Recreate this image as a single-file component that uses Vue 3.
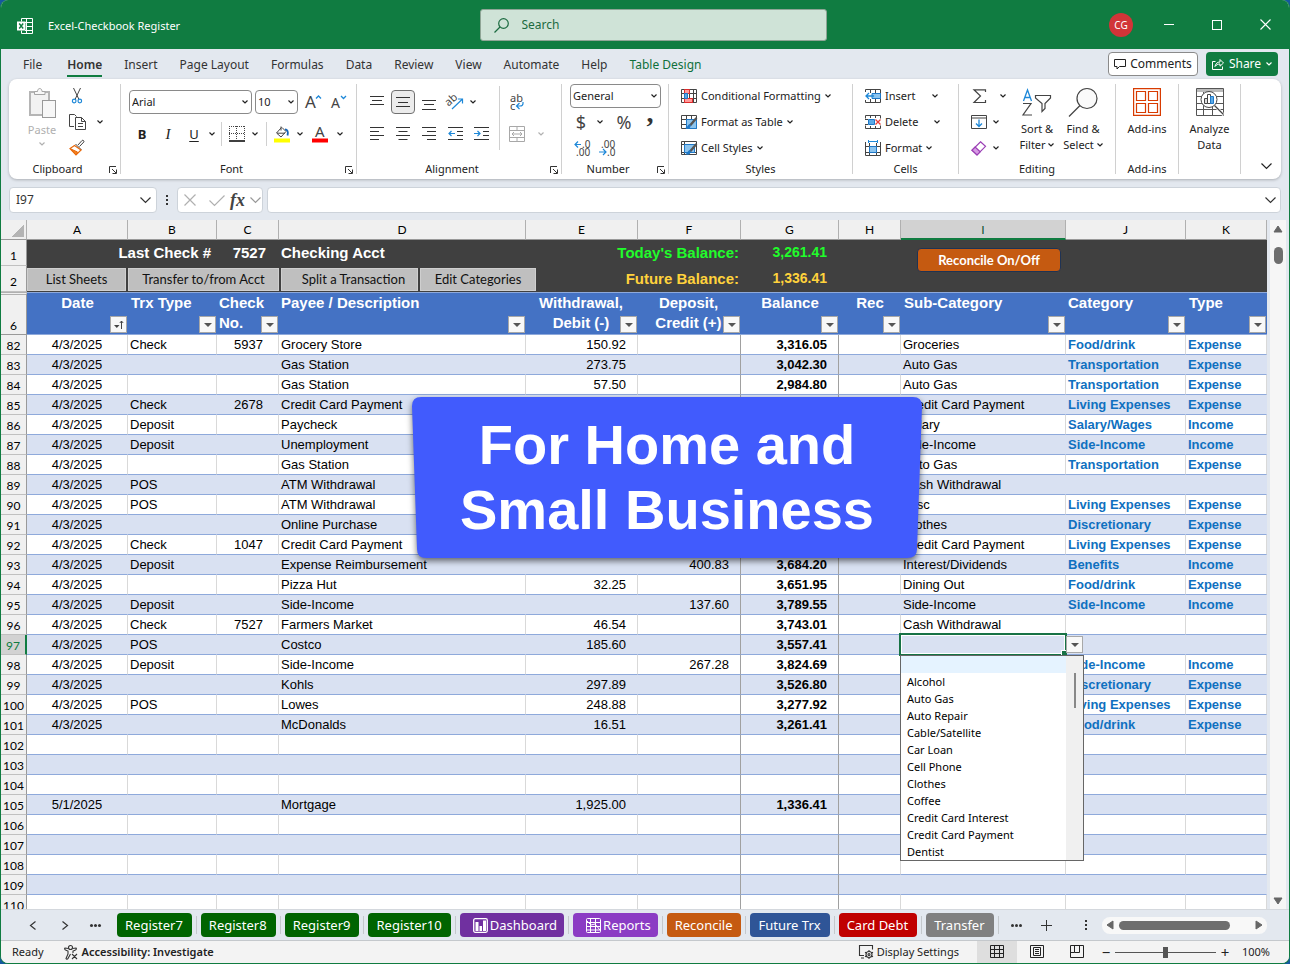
<script setup>
import { h, ref } from 'vue'

const iconSizes = {
  excel: [16, 16], search: [15, 15], min: [10, 10], max: [10, 10], close: [11, 11],
  comment: [12, 11], share: [12, 12], chev: [6, 4], chevL: [11, 6],
  paste: [27, 30], cut: [10, 16], copy: [17, 16], brush: [16, 16], launch: [8, 8],
  grow: [17, 16], shrink: [17, 16], border: [16, 16], fill: [16, 17], fontColor: [16, 17],
  alTop: [14, 12], alMid: [14, 12], alBot: [14, 12], alLeft: [14, 14], alCenter: [14, 14], alRight: [14, 14],
  outdent: [15, 14], indent: [15, 14], orient: [17, 16], wrap: [16, 16], merge: [16, 16],
  decInc: [16, 16], decDec: [16, 16],
  condFmt: [16, 14], fmtTable: [16, 14], cellStyles: [16, 14],
  insert: [16, 14], delete: [16, 14], format: [16, 16],
  sigma: [14, 15], fillDown: [16, 14], eraser: [16, 15], sort: [30, 28], find: [30, 28],
  addins: [28, 28], analyze: [28, 28],
  cancel: [12, 12], check: [16, 11],
  access: [14, 15], display: [15, 14], viewNormal: [14, 14], viewPage: [14, 14], viewBreak: [14, 14],
  chart: [15, 15], grid: [15, 15], prev: [6, 9], next: [6, 9], plus: [11, 11],
  triUp: [10, 8], triDown: [10, 8], triLeft: [8, 10], triRight: [8, 10], filter: [8, 4], sorted: [10, 10]
}
const Icon = (p) => h('svg', {
  class: 'icon', width: iconSizes[p.n][0], height: iconSizes[p.n][1], 'aria-hidden': 'true'
}, [h('use', { href: '#i-' + p.n })])

const menu = ['File', 'Home', 'Insert', 'Page Layout', 'Formulas', 'Data', 'Review', 'View', 'Automate', 'Help', 'Table Design']
const fontName = ref('Arial')
const fontSize = ref('10')
const numberFormat = ref('General')
const cellName = ref('I97')
const formula = ref('')
const query = ref('')
const zoomLevel = ref(100)

const columns = ['A', 'B', 'C', 'D', 'E', 'F', 'G', 'H', 'I', 'J', 'K']
const headings = [
  { c: 'mid', t: 'Date', f: 'sorted' }, { c: 'pad', t: 'Trx Type' }, { c: '', t: 'Check No.', narrow: true },
  { c: '', t: 'Payee / Description' }, { c: 'mid', t: 'Withdrawal, Debit (-)', narrow: true },
  { c: 'mid', t: 'Deposit, Credit (+)', narrow: true }, { c: 'mid', t: 'Balance' }, { c: 'mid', t: 'Rec' },
  { c: 'pad', t: 'Sub-Category' }, { c: '', t: 'Category' }, { c: 'pad', t: 'Type' }
]
const E = 'Expense', I = 'Income', D = '4/3/2025'
const rows = [
  [82, D, 'Check', '5937', 'Grocery Store', '150.92', '', '3,316.05', 'Groceries', 'Food/drink', E],
  [83, D, '', '', 'Gas Station', '273.75', '', '3,042.30', 'Auto Gas', 'Transportation', E],
  [84, D, '', '', 'Gas Station', '57.50', '', '2,984.80', 'Auto Gas', 'Transportation', E],
  [85, D, 'Check', '2678', 'Credit Card Payment', '', '', '', 'Credit Card Payment', 'Living Expenses', E],
  [86, D, 'Deposit', '', 'Paycheck', '', '', '', 'Salary', 'Salary/Wages', I],
  [87, D, 'Deposit', '', 'Unemployment', '', '', '', 'Side-Income', 'Side-Income', I],
  [88, D, '', '', 'Gas Station', '', '', '', 'Auto Gas', 'Transportation', E],
  [89, D, 'POS', '', 'ATM Withdrawal', '', '', '', 'Cash Withdrawal', '', ''],
  [90, D, 'POS', '', 'ATM Withdrawal', '', '', '', 'Misc', 'Living Expenses', E],
  [91, D, '', '', 'Online Purchase', '', '', '', 'Clothes', 'Discretionary', E],
  [92, D, 'Check', '1047', 'Credit Card Payment', '', '', '', 'Credit Card Payment', 'Living Expenses', E],
  [93, D, 'Deposit', '', 'Expense Reimbursement', '', '400.83', '3,684.20', 'Interest/Dividends', 'Benefits', I],
  [94, D, '', '', 'Pizza Hut', '32.25', '', '3,651.95', 'Dining Out', 'Food/drink', E],
  [95, D, 'Deposit', '', 'Side-Income', '', '137.60', '3,789.55', 'Side-Income', 'Side-Income', I],
  [96, D, 'Check', '7527', 'Farmers Market', '46.54', '', '3,743.01', 'Cash Withdrawal', '', ''],
  [97, D, 'POS', '', 'Costco', '185.60', '', '3,557.41', '', '', ''],
  [98, D, 'Deposit', '', 'Side-Income', '', '267.28', '3,824.69', '', 'Side-Income', I],
  [99, D, '', '', 'Kohls', '297.89', '', '3,526.80', '', 'Discretionary', E],
  [100, D, 'POS', '', 'Lowes', '248.88', '', '3,277.92', '', 'Living Expenses', E],
  [101, D, '', '', 'McDonalds', '16.51', '', '3,261.41', '', 'Food/drink', E],
  [102], [103], [104],
  [105, '5/1/2025', '', '', 'Mortgage', '1,925.00', '', '1,336.41', '', '', ''],
  [106], [107], [108], [109], [110]
]
const choices = ['', 'Alcohol', 'Auto Gas', 'Auto Repair', 'Cable/Satellite', 'Car Loan', 'Cell Phone', 'Clothes', 'Coffee', 'Credit Card Interest', 'Credit Card Payment', 'Dentist']
const sheets = [
  { t: 'Register7', c: 'green' }, { t: 'Register8', c: 'green' }, { t: 'Register9', c: 'green' }, { t: 'Register10', c: 'green' },
  { t: 'Dashboard', c: 'purple', i: 'chart' }, { t: 'Reports', c: 'violet', i: 'grid' }, { t: 'Reconcile', c: 'orange' },
  { t: 'Future Trx', c: 'blue' }, { t: 'Card Debt', c: 'red' }, { t: 'Transfer', c: 'gray' }
]
</script>

<template>
  <div class="window">
    <svg class="sprite" width="0" height="0" aria-hidden="true" fill="none" stroke="#444" stroke-width="1">
      <defs>
        <g id="i-excel"><path d="M4.500 3.500V.5h11v15h-11V12.500M9.500.5v15M8 4.500h7.500M9 8.500h6.500M8 12.500h7.500" stroke="#fff" fill="none" /><rect y="3.500" width="8.500" height="9" fill="#fff" /><path d="M2.200 5.500l4 5M6.200 5.500l-4 5" stroke="#107c41" stroke-width="1.400" /></g>
        <g id="i-search" stroke="#1c6b40" fill="none" stroke-width="1.200"><circle cx="9.500" cy="5.500" r="4.800" /><path d="M6 9L.5 14.500" /></g>
        <path id="i-min" d="M0 4.500h10" stroke="#fff" />
        <rect id="i-max" x=".5" y=".5" width="9" height="9" stroke="#fff" fill="none" />
        <path id="i-close" d="M.5.5l10 10M10.500.5l-10 10" stroke="#fff" stroke-width="1.100" />
        <path id="i-comment" d="M.5.5h11v7h-6L3 10V7.500H.5z" stroke="#222" fill="none" />
        <path id="i-share" d="M3.500 3.500h-3v8h10V8.500M3 8.500c.5-3 2.500-4.500 5-4.500V1.500l3.500 3.500L8 8.200V6C6 6 4.300 6.800 3 8.500z" stroke="#fff" fill="none" />
        <path id="i-chev" d="M.5.5L3 3 5.500.5" stroke="currentColor" stroke-width="1.200" fill="none" />
        <path id="i-chevL" d="M.5.5l5 5 5-5" stroke="currentColor" stroke-width="1.200" fill="none" />
        <g id="i-paste"><rect x="1" y="4" width="19" height="23" fill="#f2f2f2" stroke="#b5b5b5" stroke-width="2" /><path d="M5.500 6.500v-3h3c0-4 4.500-4 4.500 0h3v3z" fill="#f7f7f7" stroke="#a5a5a5" /><rect x="13.500" y="12.500" width="13" height="17" fill="#f7f7f7" stroke="#999" /></g>
        <g id="i-cut" fill="none"><path d="M1.500 0L7 11.500M8.500 0L3 11.500" stroke="#444" /><circle cx="2.200" cy="13" r="1.800" stroke="#1e88d8" stroke-width="1.200" /><circle cx="7.800" cy="13" r="1.800" stroke="#1e88d8" stroke-width="1.200" /></g>
        <g id="i-copy" stroke="#444" fill="none"><path d="M5 12.500H.5V.5h5l2 2" /><path d="M6.500 3.500h6l4 4v8h-10zM12.500 3.500v4h4M9 9.500h5M9 12.500h5" /></g>
        <g id="i-brush"><path d="M9 5l4-4.500c1-.8 2.500.5 1.800 1.500L10.500 6.500M6.500 4l6 6" stroke="#444" fill="none" /><path d="M5.500 5.500L1 8.500l6 6.500 5-5z" fill="#fff" stroke="#e8690b" stroke-width="1.200" /><path d="M2 9l6.500 3-1.500 3z" fill="#f58220" stroke="#e8690b" /></g>
        <path id="i-launch" d="M.5 7V.5H7M3 3l4 4M7.500 3.500v4h-4" stroke="#333" fill="none" />
        <g id="i-grow"><text x="0" y="14" font-size="17" fill="#444" stroke="none" class="glyph">A</text><path d="M11 4.500L13.500 2 16 4.500" stroke="#1e88d8" fill="none" stroke-width="1.300" /></g>
        <g id="i-shrink"><text x="0" y="14" font-size="14" fill="#444" stroke="none" class="glyph">A</text><path d="M10 2l2.500 2.500L15 2" stroke="#1e88d8" fill="none" stroke-width="1.300" /></g>
        <g id="i-border"><path d="M.5 0v14M15.500 0v14M0 .5h16M7.500 0v14M0 7.500h16" stroke="#444" stroke-dasharray="1 1" /><path d="M0 15h16" stroke="#000" stroke-width="1.600" /></g>
        <g id="i-fill"><path d="M7.500 1.500L2.500 7l4.500 4L12 5.500 8 1.500M7 .5v4M3 7.200h8" stroke="#444" fill="none" /><path d="M11 3.500c2.500 0 3.500 2 2.500 6" stroke="#1565b8" stroke-width="1.800" fill="none" /><path d="M0 12.500h16v4H0z" fill="#ff0" stroke="none" /></g>
        <g id="i-fontColor"><text x="3" y="11" font-size="15" fill="#444" stroke="none" class="glyph">A</text><path d="M0 12.500h16v4H0z" fill="#f00" stroke="none" /></g>
        <path id="i-alTop" d="M0 .5h14M2 4.500h10M0 8.500h14" stroke="#333" />
        <path id="i-alMid" d="M0 1.500h14M2 6.500h10M0 10.500h14" stroke="#333" />
        <path id="i-alBot" d="M0 4.500h14M2 8.500h10M0 13.500h14" stroke="#333" />
        <path id="i-alLeft" d="M0 .5h14M0 4.500h9M0 8.500h14M0 12.500h9" stroke="#333" />
        <path id="i-alCenter" d="M0 .5h14M2.500 4.500h9M0 8.500h14M2.500 12.500h9" stroke="#333" />
        <path id="i-alRight" d="M0 .5h14M5 4.500h9M0 8.500h14M5 12.500h9" stroke="#333" />
        <g id="i-outdent"><path d="M0 .5h15M9 4.500h6M9 8.500h6M0 12.500h15" stroke="#333" /><path d="M7 6.500H1M3.500 4L1 6.500 3.500 9" stroke="#1e88d8" stroke-width="1.200" fill="none" /></g>
        <g id="i-indent"><path d="M0 .5h15M9 4.500h6M9 8.500h6M0 12.500h15" stroke="#333" /><path d="M0 6.500h6M3.500 4L6 6.500 3.500 9" stroke="#1e88d8" stroke-width="1.200" fill="none" /></g>
        <g id="i-orient"><text x="-1" y="10" font-size="11" fill="#444" stroke="none" class="glyph" transform="rotate(-42 4 8)">ab</text><path d="M5 15L15.500 5M11 5h4.500v4.500" stroke="#1e88d8" fill="none" stroke-width="1.200" /></g>
        <g id="i-wrap"><text x="1" y="8" font-size="11" fill="#444" stroke="none" class="glyph">ab</text><text x="1" y="16" font-size="11" fill="#444" stroke="none" class="glyph">c</text><path d="M14 8v1.500q0 2.500-3 2.500H7.500M10.500 9l-3 3 3 3" stroke="#1e88d8" fill="none" stroke-width="1.200" /></g>
        <path id="i-merge" d="M.5.5h15v15H.5zM8 .5v4M8 11.500v4M.5 4.500h15M.5 11.500h15M3 8h10M5 6L3 8l2 2M11 6l2 2-2 2" stroke="#a8a8a8" fill="none" />
        <g id="i-decInc"><text x="8" y="8" font-size="10" fill="#444" stroke="none" class="glyph">.0</text><text x="2" y="16" font-size="10" fill="#444" stroke="none" class="glyph">.00</text><path d="M7 4.500H1M4 1.500l-3 3 3 3" stroke="#1e88d8" fill="none" stroke-width="1.200" /></g>
        <g id="i-decDec"><text x="2" y="8" font-size="10" fill="#444" stroke="none" class="glyph">.00</text><text x="8" y="16" font-size="10" fill="#444" stroke="none" class="glyph">.0</text><path d="M0 12h7M4 9l3 3-3 3" stroke="#1e88d8" fill="none" stroke-width="1.200" /></g>
        <g id="i-condFmt"><path d="M.5.5h15v13H.5zM3.500 0v14M8.500 0v14M12.500 0v14M0 4.500h16M0 9.500h16" stroke="#444" fill="none" /><path d="M3.500.5h5v4h-5zM3.500 9.500h8v4h-8z" fill="#ff9a9a" stroke="#e02b2b" /><path d="M3.500 4.500h3v5h-3z" fill="#5aa9e6" stroke="#1e78c8" /></g>
        <g id="i-fmtTable"><path d="M.5.5h15v13H.5zM5.500 0v14M10.500 0v14M0 4.500h16M0 9.500h16" stroke="#444" fill="none" /><path d="M5.500 4.500h10v9h-10z" fill="#8cc4ee" stroke="#1e78c8" /><path d="M15.500 3L9 10.500" stroke="#555" stroke-width="2.400" /><path d="M9.500 9.500c-3-1-2.500 3.500-5.500 3.500 2.500 1.800 6.500.5 5.500-3.500z" fill="#1e78c8" stroke="none" /></g>
        <g id="i-cellStyles"><path d="M.5.5h15v13H.5zM3.500 0v14M0 3.500h16M0 11.500h16" stroke="#444" fill="none" /><path d="M3.500 3.500h10v8h-10z" fill="#8cc4ee" stroke="#1e78c8" /><path d="M15.500 3L9 10.500" stroke="#555" stroke-width="2.400" /><path d="M9.500 9.500c-3-1-2.500 3.500-5.500 3.500 2.500 1.800 6.500.5 5.500-3.500z" fill="#1e78c8" stroke="none" /></g>
        <g id="i-insert"><path d="M.5 3V.5h15v13H.5V11M5.500 0v4M10.500 0v14M5.500 10v4M10 4.500h5M10 9.500h5" stroke="#444" fill="none" /><path d="M7 4.500h8.500v5H7z" fill="#8cc4ee" stroke="#1e78c8" /><path d="M9 7H1M4 4L1 7l3 3" stroke="#1e88d8" fill="none" stroke-width="1.300" /></g>
        <g id="i-delete"><path d="M.5 3.500v-3h15v3M.5 10.500v3h15v-3M5.500 0v3M10.500 0v3M5.500 11v3M10.500 11v3M0 4.500h3M0 9.500h3" stroke="#444" fill="none" /><path d="M3.500 4.500h6v5h-6z" fill="#5aa9e6" stroke="#1e78c8" /><path d="M10.500 4.500l5 5M15.500 4.500l-5 5" stroke="#e8403a" stroke-width="1.300" /></g>
        <g id="i-format"><path d="M.5 2v13.500h15V2M4.500 3v12.500M11.500 3v12.500M0 6.500h16M0 12.500h16" stroke="#444" fill="none" /><path d="M4.500 6.500h7v6h-7z" fill="#8cc4ee" stroke="#1e78c8" /><path d="M3.500 0v3M12.500 0v3M3.500 1.500h9" stroke="#1e88d8" fill="none" /></g>
        <path id="i-sigma" d="M12.500 3V.8H1L7.500 7 1 13.500h11.500V11" stroke="#444" fill="none" stroke-width="1.200" />
        <g id="i-fillDown"><path d="M.5.5h15v13H.5zM.5 3h15" stroke="#444" fill="none" /><path d="M8 4.500v7M5 8.500l3 3 3-3" stroke="#1e88d8" fill="none" stroke-width="1.300" /></g>
        <g id="i-eraser"><path d="M9.500.8l5 4.500L6 14 1 9.200z" stroke="#9b3fb5" fill="#fff" stroke-width="1.200" /><path d="M4.200 6L1 9.200 6 14l3.200-3.200z" stroke="#9b3fb5" fill="#d79be4" stroke-width="1.200" /></g>
        <g id="i-sort"><path d="M1.500 13L5.500 2l4 11M3 9.500h5" stroke="#1e88d8" fill="none" stroke-width="1.300" /><path d="M1 15.500h8l-8 11.500h9" stroke="#444" fill="none" stroke-width="1.200" /><path d="M13.500 7.500h15v2.500l-5.500 5.500v5l-3 3v-8L13.500 10z" stroke="#444" fill="none" stroke-width="1.200" /></g>
        <g id="i-find" fill="#fafafa" stroke="#444" stroke-width="1.200"><circle cx="19" cy="10.500" r="10" /><path d="M12 17.500L1 28.500" /></g>
        <path id="i-addins" d="M.6.6h26.800v26.800H.6zM3.500 3.500h9v9h-9zM15.500 3.500h9v9h-9zM3.500 15.500h9v9h-9zM15.500 15.500h9v9h-9z" stroke="#d83b01" fill="none" stroke-width="1.200" />
        <g id="i-analyze"><path d="M.5.5h27v27H.5zM0 8.500h28M0 15.500h28M0 21.500h28M7.500 4v24M16.500 4v24" stroke="#555" fill="#fff" /><path d="M1 1h26v3H1z" fill="#bbb" stroke="none" /><circle cx="13" cy="11.500" r="8" fill="#fff" stroke="#444" /><path d="M19 17.500l8.500 9.500" stroke="#fff" stroke-width="3" /><path d="M18.500 17.500l9 9" stroke="#444" stroke-width="1.200" /><path d="M8.500 10.500h3v5h-3z" stroke="#444" fill="#ddd" /><path d="M11.500 6.500h3v9h-3z" stroke="#444" fill="#fff" /><path d="M14.500 8.500h3v7h-3z" stroke="#1e78c8" fill="#5aa9e6" /></g>
        <path id="i-cancel" d="M.5.5l11 11M11.500.5l-11 11" stroke="#b0b0b0" stroke-width="1.200" />
        <path id="i-check" d="M.5 5.500l5 5L15.500.5" stroke="#b0b0b0" fill="none" stroke-width="1.200" />
        <g id="i-access" stroke="#333" fill="none" stroke-width="1.100"><circle cx="6.500" cy="2.500" r="2" /><path d="M4.500 3.500L1 3c-1 .8 0 2 1 2.200l2 .8v3L2 13.500c.3 1 1.500 1 2 0L6.500 9M8.500 3.500L12 3c1 .8 0 2-1 2.200L9 6v2M8 9l5 5M13 9l-5 5" /></g>
        <g id="i-display" stroke="#333" fill="none" stroke-width="1.100"><path d="M5 10.500H.5V.5h13v4M2 13h3" /><circle cx="10" cy="9.500" r="3" /><circle cx="10" cy="9.500" r="1" /><path d="M10 5v1.500M10 12.500V14M6 7.200l1.400.8M12.600 11l1.400.8M6 11.800l1.400-.8M12.600 8l1.400-.8" /></g>
        <path id="i-viewNormal" d="M.5.5h13v12H.5zM4.500 0v13M9.500 0v13M0 4.500h14M0 8.500h14" stroke="#222" fill="none" />
        <path id="i-viewPage" d="M.5.5h13v12H.5zM3.500 2.500h7v8h-7zM5 4.500h4M5 6.500h4M5 8.500h4" stroke="#222" fill="none" />
        <path id="i-viewBreak" d="M.5.5h13v12H.5zM4.500.5v7h5v-7M.5 7.500h4" stroke="#222" fill="none" />
        <g id="i-chart"><rect x=".7" y=".7" width="13.600" height="13.600" rx="1.500" stroke="#fff" fill="none" stroke-width="1.300" /><path d="M2.500 4h3v9h-3zM6.500 8h2.500v5H6.500zM10 2.500h3V13h-3z" fill="#fff" stroke="none" /></g>
        <g id="i-grid" stroke="#fff" fill="none"><rect x=".5" y=".5" width="14" height="14" rx="1" /><path d="M4.500 0v15M9.500 0v15M0 4.500h15M0 8.500h15M0 12h15M1 3l4 4 4-1 5 6" /></g>
        <path id="i-prev" d="M5.500.5l-5 4 5 4" stroke="#333" fill="none" stroke-width="1.200" />
        <path id="i-next" d="M.5.5l5 4-5 4" stroke="#333" fill="none" stroke-width="1.200" />
        <path id="i-plus" d="M5.500 0v11M0 5.500h11" stroke="#333" />
        <path id="i-triUp" d="M5 1l4 6H1z" fill="#666" stroke="#666" stroke-linejoin="round" />
        <path id="i-triDown" d="M5 7l4-6H1z" fill="#666" stroke="#666" stroke-linejoin="round" />
        <path id="i-triLeft" d="M1 5l6-4v8z" fill="#666" stroke="#666" stroke-linejoin="round" />
        <path id="i-triRight" d="M7 5L1 1v8z" fill="#666" stroke="#666" stroke-linejoin="round" />
        <path id="i-filter" d="M0 0h8L4 4z" fill="#555" stroke="none" />
        <g id="i-sorted"><path d="M0 5h5.500L2.800 8z" fill="#444" stroke="none" /><path d="M7.500 9V1M5.800 3l1.700-2 1.700 2" stroke="#444" fill="none" /></g>
      </defs>
    </svg>

    <header class="titlebar">
      <div class="title"><Icon n="excel" /><span>Excel-Checkbook Register</span></div>
      <label class="search"><Icon n="search" /><input v-model="query" type="search" placeholder="Search" aria-label="Search" /></label>
      <div class="controls">
        <button class="avatar">CG</button>
        <button aria-label="Minimize"><Icon n="min" /></button>
        <button aria-label="Maximize"><Icon n="max" /></button>
        <button aria-label="Close"><Icon n="close" /></button>
      </div>
    </header>

    <nav class="menu">
      <button v-for="m in menu" :key="m" :class="{ on: m === 'Home', design: m === 'Table Design' }">{{ m }}</button>
      <span class="grow"></span>
      <button class="comments"><Icon n="comment" />Comments</button>
      <button class="share"><Icon n="share" />Share<Icon n="chev" /></button>
    </nav>

    <section class="ribbon">
      <div class="group">
        <div class="clip">
          <button class="paste" disabled><Icon n="paste" /><span>Paste</span><Icon n="chev" /></button>
          <button aria-label="Cut"><Icon n="cut" /></button><span></span>
          <button aria-label="Copy"><Icon n="copy" /></button><button aria-label="Copy options"><Icon n="chev" /></button>
          <button aria-label="Format painter"><Icon n="brush" /></button>
        </div>
        <div class="label">Clipboard<button aria-label="Clipboard settings"><Icon n="launch" /></button></div>
      </div>

      <div class="group">
        <div class="two">
          <div class="line boxes">
            <span class="pick wide"><select v-model="fontName" aria-label="Font"><option>Arial</option></select><Icon n="chev" /></span>
            <span class="pick small"><select v-model="fontSize" aria-label="Font size"><option>10</option></select><Icon n="chev" /></span>
            <button class="b26" aria-label="Grow font"><Icon n="grow" /></button>
            <button class="b26" aria-label="Shrink font"><Icon n="shrink" /></button>
          </div>
          <div class="line">
            <button class="b26 bold">B</button><button class="b26 ital">I</button><button class="b26 under">U</button>
            <button class="b10" aria-label="Underline options"><Icon n="chev" /></button><i class="rule"></i>
            <button class="b22" aria-label="Borders"><Icon n="border" /></button><button class="b14" aria-label="Border options"><Icon n="chev" /></button><i class="rule"></i>
            <button class="b22" aria-label="Fill color"><Icon n="fill" /></button><button class="b14" aria-label="Fill options"><Icon n="chev" /></button>
            <button class="b26" aria-label="Font color"><Icon n="fontColor" /></button><button class="b14" aria-label="Color options"><Icon n="chev" /></button>
          </div>
        </div>
        <div class="label">Font<button aria-label="Font settings"><Icon n="launch" /></button></div>
      </div>

      <div class="group">
        <div class="align">
          <div class="five">
            <button aria-label="Top align"><Icon n="alTop" /></button>
            <button class="active" aria-label="Middle align"><Icon n="alMid" /></button>
            <button aria-label="Bottom align"><Icon n="alBot" /></button>
            <button aria-label="Orientation"><Icon n="orient" /></button>
            <button class="startward" aria-label="Orientation options"><Icon n="chev" /></button>
            <button aria-label="Align left"><Icon n="alLeft" /></button>
            <button aria-label="Center"><Icon n="alCenter" /></button>
            <button aria-label="Align right"><Icon n="alRight" /></button>
            <button aria-label="Decrease indent"><Icon n="outdent" /></button>
            <button aria-label="Increase indent"><Icon n="indent" /></button>
          </div>
          <div class="wraps">
            <button aria-label="Wrap text"><Icon n="wrap" /></button><span></span>
            <button aria-label="Merge" disabled><Icon n="merge" /></button><button aria-label="Merge options" disabled><Icon n="chev" /></button>
          </div>
        </div>
        <div class="label">Alignment<button aria-label="Alignment settings"><Icon n="launch" /></button></div>
      </div>

      <div class="group">
        <div class="stack number">
          <span class="pick"><select v-model="numberFormat" aria-label="Number format"><option>General</option></select><Icon n="chev" /></span>
          <div class="line"><button class="b22 sym">$</button><button class="b14" aria-label="Currency options"><Icon n="chev" /></button><button class="b26 sym">%</button><button class="b26 comma" aria-label="Comma style">,</button></div>
          <div class="line"><button class="b26" aria-label="Increase decimal"><Icon n="decInc" /></button><button class="b26" aria-label="Decrease decimal"><Icon n="decDec" /></button></div>
        </div>
        <div class="label">Number<button aria-label="Number settings"><Icon n="launch" /></button></div>
      </div>

      <div class="group">
        <div class="stack cmds">
          <button><Icon n="condFmt" />Conditional Formatting<Icon n="chev" /></button>
          <button><Icon n="fmtTable" />Format as Table<Icon n="chev" /></button>
          <button><Icon n="cellStyles" />Cell Styles<Icon n="chev" /></button>
        </div>
        <div class="label">Styles</div>
      </div>

      <div class="group">
        <div class="stack cmds split">
          <button><Icon n="insert" />Insert<Icon n="chev" /></button>
          <button><Icon n="delete" />Delete<Icon n="chev" /></button>
          <button class="near"><Icon n="format" />Format<Icon n="chev" /></button>
        </div>
        <div class="label">Cells</div>
      </div>

      <div class="group">
        <div class="edit">
          <div class="stack">
            <button class="gap" aria-label="AutoSum"><Icon n="sigma" /><Icon n="chev" /></button>
            <button aria-label="Fill"><Icon n="fillDown" /><Icon n="chev" /></button>
            <button aria-label="Clear"><Icon n="eraser" /><Icon n="chev" /></button>
          </div>
          <button class="big"><Icon n="sort" /><span>Sort &amp;<br />Filter <Icon n="chev" /></span></button>
          <button class="big"><Icon n="find" /><span>Find &amp;<br />Select <Icon n="chev" /></span></button>
        </div>
        <div class="label">Editing</div>
      </div>

      <div class="group">
        <button class="big"><Icon n="addins" /><span>Add-ins</span></button>
        <div class="label">Add-ins</div>
      </div>
      <div class="group"><button class="big"><Icon n="analyze" /><span>Analyze<br />Data</span></button></div>
      <button class="collapse" aria-label="Collapse ribbon"><Icon n="chevL" /></button>
    </section>

    <section class="formula">
      <label class="field name"><input v-model="cellName" aria-label="Name box" /><Icon n="chevL" /></label>
      <span class="vdots"></span>
      <div class="field fx">
        <button aria-label="Cancel"><Icon n="cancel" /></button><button aria-label="Enter"><Icon n="check" /></button><button class="fn">fx</button><Icon n="chevL" />
      </div>
      <label class="field wide"><input v-model="formula" aria-label="Formula bar" /><Icon n="chevL" /></label>
    </section>

    <main class="sheet">
      <div class="cells">
        <table>
          <colgroup>
            <col class="w26" /><col class="w101" /><col class="w89" /><col class="w62" /><col /><col class="w112" /><col class="w103" /><col class="w98" /><col class="w62" /><col class="w165" /><col class="w120" /><col class="w81" />
          </colgroup>
          <thead>
            <tr class="letters"><th class="corner"></th><th v-for="c in columns" :key="c" :class="{ sel: c === 'I' }">{{ c }}</th></tr>
            <tr class="dark">
              <th class="num">1</th><td colspan="2" class="end wide-pad">Last Check #</td><td class="end">7527</td><td>Checking Acct</td>
              <td colspan="2" class="end thin lime">Today's Balance:</td><td class="end value lime">3,261.41</td>
              <td></td><td rowspan="2" class="recon"><button>Reconcile On/Off</button></td><td colspan="2"></td>
            </tr>
            <tr class="dark">
              <th class="num">2</th>
              <td colspan="4" class="tools"><div><button class="t1">List Sheets</button><button class="t2">Transfer to/from Acct</button><button class="t3">Split a Transaction</button><button class="t4">Edit Categories</button></div></td>
              <td colspan="2" class="end thin gold">Future Balance:</td><td class="end value gold">1,336.41</td><td></td><td colspan="2"></td>
            </tr>
            <tr class="heads">
              <th class="num six">6</th>
              <th v-for="hd in headings" :key="hd.t" :class="[hd.c, { narrow: hd.narrow }]"><span>{{ hd.t }}</span><button class="drop" :aria-label="'Filter ' + hd.t"><Icon :n="hd.f || 'filter'" /></button></th>
            </tr>
          </thead>
          <tbody>
            <tr v-for="r in rows" :key="r[0]" :class="{ band: r[0] % 2 }">
              <th class="num" :class="{ sel: r[0] === 97 }">{{ r[0] }}</th>
              <td class="date">{{ r[1] }}</td><td>{{ r[2] }}</td><td class="chk">{{ r[3] }}</td><td>{{ r[4] }}</td>
              <td class="amt">{{ r[5] }}</td><td class="amt edge">{{ r[6] }}</td><td class="amt edge strong">{{ r[7] }}</td><td></td>
              <td :class="{ current: r[0] === 97 }">{{ r[8] }}
                <template v-if="r[0] === 97">
                  <div class="outline"></div>
                  <button class="drop" aria-label="Choose sub-category" aria-haspopup="listbox"><Icon n="filter" /></button>
                  <div class="list">
                    <ul role="listbox" aria-label="Sub-Category"><li v-for="(o, i) in choices" :key="i" role="option" :aria-selected="i === 0">{{ o }}</li></ul>
                    <div class="bar"></div>
                  </div>
                </template>
              </td>
              <td class="cat">{{ r[9] }}</td><td class="cat">{{ r[10] }}</td>
            </tr>
          </tbody>
        </table>
        <aside class="callout">
          <svg viewBox="0 0 510 163" preserveAspectRatio="none" aria-hidden="true"><path d="M9 0H501Q510 0 510 9L505 152Q505 161 495 161H14Q5 161 5 152L0 9Q0 0 9 0z" fill="#415bfd" /></svg>
          <p>For Home and<br />Small Business</p>
        </aside>
      </div>
      <div class="vscroll"><Icon n="triUp" /><span class="thumb"></span><span class="grow"></span><Icon n="triDown" /></div>
    </main>

    <footer class="tabs">
      <button class="nav" aria-label="Previous sheet"><Icon n="prev" /></button>
      <button class="nav" aria-label="Next sheet"><Icon n="next" /></button>
      <button class="nav dots" aria-label="More sheets"><b></b><b></b><b></b></button>
      <button v-for="s in sheets" :key="s.t" class="tab" :class="s.c"><Icon v-if="s.i" :n="s.i" />{{ s.t }}</button>
      <button class="nav dots" aria-label="All sheets"><b></b><b></b><b></b></button>
      <button class="nav" aria-label="New sheet"><Icon n="plus" /></button>
      <span class="grow"></span>
      <span class="vdots"></span>
      <div class="hscroll"><Icon n="triLeft" /><span class="thumb"></span><span class="grow"></span><Icon n="triRight" /></div>
    </footer>

    <footer class="status">
      <span class="ready">Ready</span>
      <button class="acc"><Icon n="access" />Accessibility: Investigate</button>
      <span class="grow"></span>
      <button class="disp"><Icon n="display" />Display Settings</button>
      <button class="view on" aria-label="Normal view"><Icon n="viewNormal" /></button>
      <button class="view" aria-label="Page layout view"><Icon n="viewPage" /></button>
      <button class="view" aria-label="Page break view"><Icon n="viewBreak" /></button>
      <button class="zb" aria-label="Zoom out">−</button>
      <input v-model="zoomLevel" type="range" min="0" max="200" aria-label="Zoom" />
      <button class="zb" aria-label="Zoom in">+</button>
      <span class="pct">{{ zoomLevel }}%</span>
    </footer>
  </div>
</template>

<style>
body { margin: 0; background: #15599f; }
</style>

<style scoped>
.window, .window * { box-sizing: border-box; }
.window {
  height: 100vh; display: flex; flex-direction: column; overflow: hidden;
  border: 1px solid #107c41; border-top: 0; border-radius: 8px; background: #e3e8ef;
  font: 11px/16px "Noto Sans", "Open Sans", sans-serif; color: #222;
}
.sprite { position: absolute; }
.glyph { font-family: "Noto Sans", sans-serif; }
.icon { display: block; flex: none; overflow: visible; }
.grow { flex: 1; }
button { margin: 0; padding: 0; border: 0; background: none; font: inherit; color: inherit; display: flex; align-items: center; justify-content: center; white-space: nowrap; }
input, select { font: inherit; color: inherit; border: 0; background: none; outline: 0; padding: 0; margin: 0; min-width: 0; }
select { appearance: none; }

.titlebar { flex: none; height: 49px; background: #107c41; color: #fff; display: grid; grid-template-columns: 1fr 347px 1fr; align-items: center; }
.title { display: flex; gap: 15px; padding: 2px 0 0 16px; align-items: center; }
.search { height: 32px; display: flex; align-items: center; gap: 13px; padding: 0 13px; border-radius: 3px; border: 1px solid #8fa596; background: #cfe3d7; color: #1c6b40; font-size: 12px; margin: 1px -8px 0 8px; }
.search input { flex: 1; }
.search input::placeholder { color: #1c6b40; opacity: 1; }
.controls { display: flex; justify-content: flex-end; align-items: center; }
.controls button { width: 48px; height: 32px; }
.controls .avatar { width: 24px; height: 24px; border-radius: 50%; background: #d13438; margin-right: 12px; font-size: 10px; }

.menu { flex: none; height: 30px; display: flex; align-items: center; padding: 0 18px 0 12px; font-size: 12px; color: #333; }
.menu > button { height: 26px; margin: 0 12px 0 10px; padding-top: 2px; position: relative; }
.menu > button:first-child { margin-right: 15px; }
.menu .on { font-weight: 600; }
.menu .on::after { content: ""; position: absolute; left: 0; right: 0; bottom: 0; height: 2px; background: #107c41; }
.menu .design { color: #0f703b; }
.menu .comments { height: 24px; width: 90px; margin: 0 8px 0 0; padding: 0; gap: 4px; border: 1px solid #8a8a8a; border-radius: 4px; background: #fff; color: #222; }
.menu .share { height: 24px; width: 72px; margin: 0 -7px 0 0; padding: 0; gap: 5px; border-radius: 4px; background: #107c41; color: #fff; }

.ribbon { flex: none; height: 100px; margin: 0 8px; padding: 5px 0; background: #fff; border-radius: 8px; box-shadow: 0 1px 3px rgba(0, 0, 0, .25); display: grid; grid-template-columns: 112px 236px 205px 107px 184px 106px 157px 63px 62px 1fr; }
.group { border-right: 1px solid #d0d0d0; display: flex; flex-direction: column; justify-content: space-between; }
.label { position: relative; text-align: center; line-height: 10px; padding-right: 0; }
.label:has(button) { padding-right: 14px; }
.label button { position: absolute; right: 3px; bottom: 0; }
.clip { display: grid; grid-template-columns: 48px 22px 24px; grid-auto-rows: 24px; row-gap: 2px; padding-left: 9px; }
.paste { grid-row: span 3; flex-direction: column; justify-content: flex-start; padding-top: 4px; gap: 4px; color: #b0b0b0; }
.two { padding: 2px 0 0 8px; }
.line { display: flex; align-items: center; }
.two .line { height: 32px; }
.boxes .pick.small { margin: 0 2px 0 3px; }
.pick { position: relative; display: flex; align-items: center; height: 24px; border: 1px solid #8a8a8a; border-radius: 4px; background: #fff; }
.pick select { flex: 1; height: 22px; padding-left: 2px; }
.pick .icon { position: absolute; right: 3px; pointer-events: none; }
.wide.pick { width: 123px; }
.small.pick { width: 43px; }
.b26 { width: 26px; height: 26px; }
.b22 { width: 22px; height: 24px; }
.b14 { width: 14px; height: 24px; }
.b10 { width: 10px; height: 24px; }
.bold { font-size: 13px; font-weight: 700; }
.ital { font: italic 15px "Liberation Serif", serif; }
.under { font-size: 13px; text-decoration: underline; text-underline-offset: 2px; }
.rule { width: 1px; height: 24px; background: #d0d0d0; margin: 0 4px; }
.align { display: flex; padding: 2px 0 0 7px; }
.five { display: grid; grid-template-columns: repeat(5, 26px); grid-auto-rows: 32px; align-items: center; }
.active { height: 24px; width: 24px; margin: auto; border: 1px solid #707070; border-radius: 4px; background: #ececec; }
.startward { width: 10px; }
.wraps { display: grid; grid-template-columns: 24px 24px; grid-auto-rows: 32px; align-items: center; margin-left: 5px; padding-left: 5px; border-left: 1px solid #d0d0d0; color: #b0b0b0; }
.stack { display: grid; grid-auto-rows: 24px; row-gap: 2px; justify-items: start; }
.number { padding: 0 0 0 8px; }
.number .pick { width: 91px; }
.number .line:last-child .b26:first-child { width: 24px; }
.sym { font-size: 18px; color: #444; }
.number .b14 { margin: 0 4px 0 1px; }
.comma { font: 700 28px/10px "Liberation Serif", serif; padding-bottom: 18px; color: #333; }
.cmds { padding-left: 12px; }
.cmds button { height: 24px; gap: 4px; }
.split button .icon:last-child { margin-left: 12px; }
.split .near .icon:last-child { margin-left: 0; }
.edit { display: flex; }
.edit .stack { width: 55px; padding-left: 12px; }
.edit .stack button { height: 24px; gap: 6px; }
.edit .stack .gap { gap: 13px; padding-left: 2px; }
.big { flex-direction: column; justify-content: flex-start; gap: 5px; padding-top: 4px; align-self: stretch; line-height: 16px; }
.edit .big { width: 46px; }
.big span .icon { display: inline-block; vertical-align: 2px; }
.collapse { align-self: end; width: 24px; height: 16px; margin-left: 13px; }

.formula { flex: none; display: flex; align-items: center; padding: 8px 8px 7px; height: 41px; }
.field { height: 26px; background: #fff; border: 1px solid #cdd3da; border-radius: 4px; display: flex; align-items: center; font-size: 12px; color: #333; }
.field input { flex: 1; padding-left: 6px; }
.field.name { width: 148px; padding-right: 5px; }
.field.wide { flex: 1; padding-right: 4px; margin-left: 4px; }
.vdots { width: 2px; height: 11px; background: repeating-linear-gradient(#333 0 2px, transparent 2px 4px); }
.formula .vdots { margin: 0 9px; }
.fx { width: 86px; padding: 0 1px 0 6px; justify-content: space-between; }
.fx button:first-child { margin-right: 8px; }
.fx .icon:last-child { color: #999; }
.fn { font: italic 700 18px "Liberation Serif", serif; color: #444; }

.sheet { flex: 1; min-height: 0; display: flex; }
.cells { flex: 1; min-width: 0; position: relative; overflow: hidden; background: #fff; }
table { width: 100%; table-layout: fixed; border-collapse: separate; border-spacing: 0; font: 13px/19px "Liberation Sans", Arial, sans-serif; color: #000; }
td, th { padding: 0 2px; white-space: nowrap; text-align: left; vertical-align: middle; }
.w26 { width: 26px; } .w101 { width: 101px; } .w89 { width: 89px; } .w62 { width: 62px; } .w112 { width: 112px; } .w103 { width: 103px; }
.w98 { width: 98px; } .w165 { width: 165px; } .w120 { width: 120px; } .w81 { width: 81px; }
.letters th { height: 20px; background: #f0f0f0; border-right: 1px solid #b0b0b0; border-bottom: 1px solid #999; text-align: center; font: 12px/18px Lato, sans-serif; }
.letters .corner { background: linear-gradient(135deg, transparent 50%, #b4b4b4 50%) 11px 5px / 12px 12px no-repeat #f0f0f0; }
.letters .sel { background: #d2d2d2; border-bottom: 2px solid #107c41; padding-top: 1px; line-height: 17px; color: #0f5132; }
.num { padding: 2px 0 0; text-align: center; font: 12px/16px Lato, sans-serif; background: #f0f0f0; border-right: 1px solid #999; border-bottom: 1px solid #c0c0c0; }
.num.sel { background: #d2d2d2; color: #107c41; border-right: 2px solid #107c41; }
.dark td { height: 26px; padding-bottom: 2px; background: #404040; color: #fff; font-weight: 700; font-size: 15px; }
.dark .num { padding-top: 6px; }
.dark .end { text-align: right; padding-right: 13px; }
.dark .end.value { padding-right: 12px; font-size: 14px; }
.dark .end.wide-pad { padding-right: 6px; }
.dark .end.thin { padding-right: 2px; }
.dark .end.lime { color: #21fc2b; }
.dark .end.gold { color: #ffd23c; }
.dark .tools { padding: 2px 0 1px; overflow: visible; }
.tools div { display: flex; width: 509px; position: relative; z-index: 1; justify-content: space-between; }
.tools button { height: 23px; padding-bottom: 2px; background: #bfbfbf; border: 1px solid #cfcfcf; color: #111; font: 13px/18px Lato, sans-serif; }
.t1 { width: 99px; } .t2 { width: 151px; } .t3 { width: 137px; } .t4 { width: 116px; }
.tools .t3 { padding-left: 8px; }
.dark .recon { padding: 0 0 12px 16px; vertical-align: bottom; }
.recon button { width: 144px; height: 24px; margin-bottom: 8px; background: #c55a11; border: 1px solid #1f3354; border-radius: 4px; color: #fff; font: 700 13px/18px Lato, sans-serif; }
.heads th { height: 43px; position: relative; vertical-align: top; border-top: 1px solid #8ea9db; border-bottom: 1px solid #8ea9db; background: #4472c4; color: #fff; font-size: 15px; line-height: 20px; }
.heads th.num { background: #f0f0f0; color: #000; font: 12px/16px Lato, sans-serif; vertical-align: bottom; border-top: 3px double #b0b0b0; border-bottom-color: #999; }
.heads .mid { text-align: center; }
.heads .pad { padding-left: 3px; }
.heads .narrow { white-space: normal; }
.heads .narrow.mid { padding-right: 4px; }
.heads .mid.narrow span { display: block; width: 88px; margin: 0 auto; }
.heads th:nth-child(7) span { width: 72px; margin-left: 14px; }
.drop { position: absolute; right: 1px; bottom: 1px; width: 17px; height: 17px; background: #f8f8f8; border: 1px solid #a8a8a8; }
tbody td { height: 20px; border-bottom: 1px solid #8ea9db; border-right: 1px solid #d9d9d9; overflow: hidden; }
tbody .band td { background: #d9e1f2; border-right-color: #d9e1f2; }
tbody td.edge, tbody .band td.edge { border-right-color: #a0a0a0; }
.date { text-align: center; }
.chk { text-align: right; padding-right: 15px; }
.amt { text-align: right; padding-right: 11px; }
.strong, .cat { font-weight: 700; }
.cat { color: #0f70c0; }
tbody .current { position: relative; overflow: visible; z-index: 2; }
.outline { position: absolute; inset: -2px; border: 2px solid #177245; box-shadow: inset 0 0 0 1px #fff; }
.outline::after { content: ""; position: absolute; right: -2px; bottom: -2px; width: 5px; height: 5px; background: #177245; border: 1px solid #fff; border-width: 1px 0 0 1px; }
.current .drop { right: -18px; bottom: 1px; }
.list { position: absolute; left: -1px; top: 20px; width: 184px; display: flex; background: #fff; border: 1px solid #666; font: 11px/17px "Noto Sans", sans-serif; }
.list ul { flex: 1; margin: 0; padding: 0; list-style: none; }
.list li { height: 17px; padding-left: 6px; }
.list li[aria-selected="true"] { background: #e5f3ff; }
.bar { width: 17px; background: linear-gradient(#888 0 0) 8px 17px / 2px 35px no-repeat #f0f0f0; }
.callout { position: absolute; z-index: 3; left: 411px; top: 177px; width: 510px; height: 163px; }
.callout svg { position: absolute; inset: 0; width: 100%; height: 100%; overflow: visible; filter: drop-shadow(0 3px 3px rgba(0, 0, 0, .55)); }
.callout p { position: relative; margin: 0; padding-top: 15px; text-align: center; color: #fff; font: 700 56px/65px "Liberation Sans", Arial, sans-serif; }
.vscroll { width: 22px; display: flex; flex-direction: column; align-items: center; padding: 5px 0 4px; background: linear-gradient(#f6f6f6 0 0) 3px 0 / 16px 100% no-repeat; }
.vscroll .thumb { width: 9px; height: 17px; margin-top: 14px; border-radius: 5px; background: #6e6e6e; }

.tabs { flex: none; height: 32px; display: flex; align-items: center; padding: 0 22px 0 16px; border-top: 1px solid #d4d8dd; border-bottom: 1px solid #c4c8cc; font-size: 13px; }
.nav { width: 32px; height: 24px; }
.nav.dots { gap: 1px; width: 28px; }
.dots b { width: 3px; height: 3px; border-radius: 50%; background: #333; }
.tab { height: 24px; padding: 0 9px 0 8px; margin-right: 9px; border-radius: 4px; color: #fff; position: relative; gap: 3px; }
.tab::after { content: ""; position: absolute; right: -5px; top: 3px; width: 1px; height: 18px; background: #c4c8cc; }
.nav + .tab { margin-left: 8px; }
.tab:has(.icon) { padding: 0 7px 0 13px; gap: 2px; }
.green { background: #006400; } .purple { background: #7030a0; } .violet { background: #8b3cc4; } .orange { background: #c55a11; }
.blue { background: #2f5597; } .red { background: #c00000; } .gray { background: #808080; }
.hscroll { width: 165px; height: 17px; margin-left: 15px; padding: 0 4px; display: flex; align-items: center; border-radius: 8px; background: #f8f8f8; }
.hscroll .thumb { width: 111px; height: 9px; margin-left: 5px; border-radius: 5px; background: #6e6e6e; }

.status { flex: none; height: 22px; display: flex; align-items: center; padding: 0 19px 0 11px; background: #f3f3f3; }
.acc { margin-left: 20px; gap: 4px; font-weight: 600; }
.disp { gap: 3px; margin-right: 18px; }
.view { width: 40px; height: 22px; }
.view.on { background: #dedede; }
.zb { width: 10px; font-size: 15px; margin-left: 4px; }
.status input { appearance: none; width: 101px; height: 12px; margin: 0 0 0 4px; background: linear-gradient(#555 0 0) 0 6px / 100% 1px no-repeat; }
.status input::-webkit-slider-thumb { appearance: none; width: 5px; height: 11px; background: #555; }
.pct { margin-left: 12px; }
</style>
